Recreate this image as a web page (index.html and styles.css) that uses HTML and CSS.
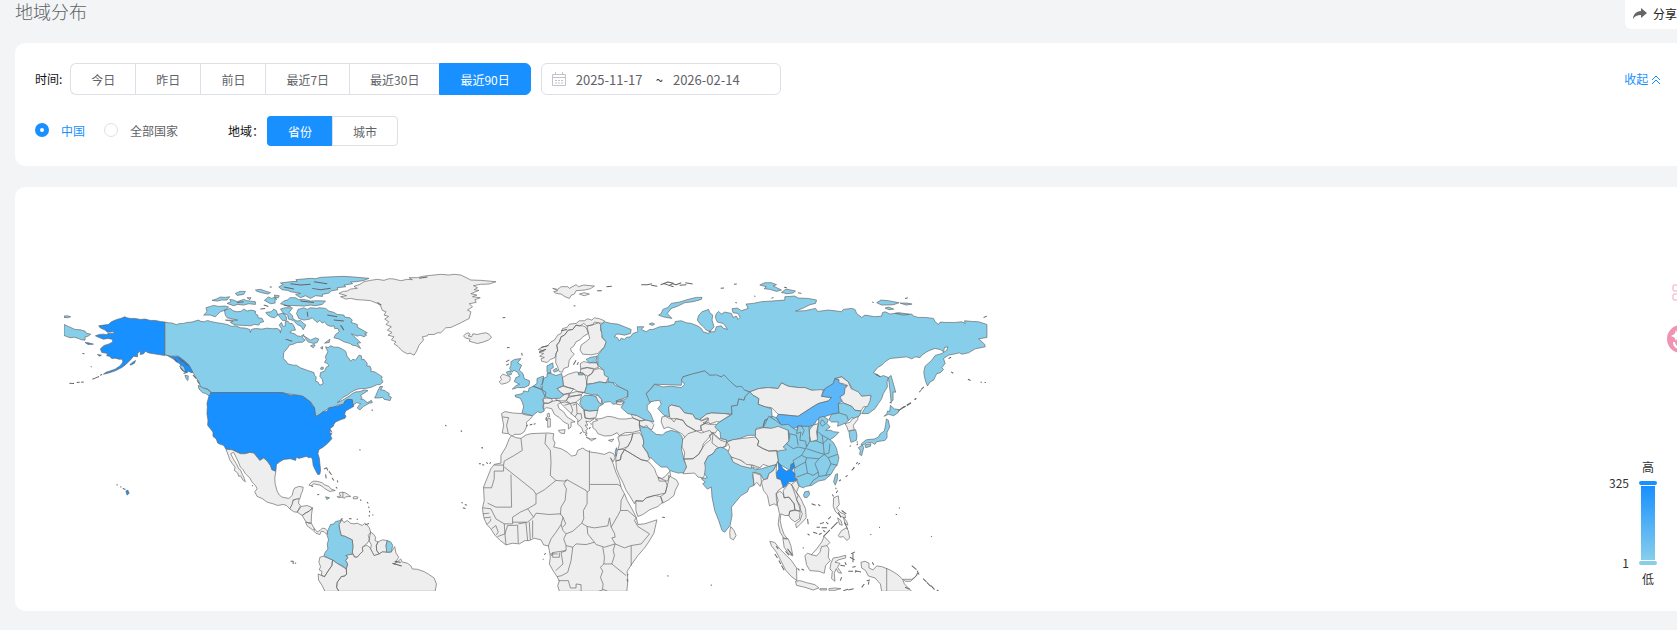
FILE: index.html
```html
<!DOCTYPE html>
<html lang="zh-CN">
<head>
    <meta charset="UTF-8">
    <meta name="viewport" content="width=device-width, initial-scale=1.0">
    <title>地域分布</title>
    <link rel="stylesheet" href="styles.css">
</head>
<body>
    <header class="page-header">
        <h1>地域分布</h1>
        <button class="share-btn" type="button">
            <svg width="16" height="14" viewBox="0 0 16 14"><path d="M9 1l6 5-6 5V8C5 8 3 9 1 12c0-4 3-8 8-8z" fill="#666"/></svg>
            分享
        </button>
    </header>

    <section class="card filters">
        <div class="filter-row">
            <span class="label">时间:</span>
            <div class="btn-group">
                <button type="button">今日</button>
                <button type="button">昨日</button>
                <button type="button">前日</button>
                <button type="button">最近7日</button>
                <button type="button">最近30日</button>
                <button type="button" class="active">最近90日</button>
            </div>
            <div class="date-range">
                <svg width="14" height="14" viewBox="0 0 14 14" fill="none" stroke="#c0c4cc"><path d="M.5 2.500h13v11H.5zM.5 5.500h13M3.500 0v3M10.500 0v3M3 8.500h2M6 8.500h2M9 8.500h2M3 11h2M6 11h2M9 11h2"/></svg>
                <input type="text" aria-label="开始日期" value="2025-11-17">
                <span>~</span>
                <input type="text" aria-label="结束日期" value="2026-02-14">
            </div>
            <a href="#" class="collapse">收起
                <svg width="10" height="10" viewBox="0 0 10 10" fill="none" stroke="#1890ff"><path d="M1 5l4-4 4 4M1 9l4-4 4 4"/></svg>
            </a>
        </div>
        <div class="filter-row">
            <label class="radio"><input type="radio" name="scope" checked><span>中国</span></label>
            <label class="radio"><input type="radio" name="scope"><span>全部国家</span></label>
            <span class="label area-label">地域：</span>
            <div class="btn-group small">
                <button type="button" class="active">省份</button>
                <button type="button">城市</button>
            </div>
        </div>
    </section>

    <section class="card chart">
        <svg class="map" viewBox="192 810 2766 962" role="img" aria-label="地域分布地图">
            <!-- Alaska, Chukotka, Hawaii -->
            <g transform="translate(150 780)">
                <path class="top" d="M344 186V286L325 283 312 281 300 279 292 277 286 273 280 281 270 283 271 272 262 280 262 290 250 288 243 297 228 312 215 322 195 332 180 337 170 340 160 342 168 336 178 333 195 327 208 318 214 312 218 306 217 297 206 297 196 294 185 295 178 288 170 287 172 280 162 278 155 277 151 266 162 256 175 252 187 246 188 238 174 235 160 237 142 230 136 227 148 223 160 222 170 224 174 219 192 219 191 214 172 216 165 210 150 203 146 197 160 195 175 193 184 185 200 178 212 175 224 170 230 173 240 175 255 175 270 178 285 177 300 181 315 181 330 184ZM344 282L362 288 375 290 384 288 395 294 404 303 416 314 428 328 426 338 414 333 410 338 400 334 400 325 392 322 390 312 384 308 376 303 372 298 358 290ZM240 312l8-6 8-5-3 8-12 6zM105 247l10 1 15 4-16 1zM142 283l12 2-5 3zM227 692l6-3 4 9-6 6z"/>
                <path class="low" d="M42 193L55 199 75 208 90 209 105 213 108 219 122 222 114 228 105 230 105 240 94 239 85 235 72 231 60 233 42 226ZM42 168l10-1 10 3-10 3-10-1z"/>
                <path class="low" d="M444 376L456 380 465 385 476 390 484 402 478 408 466 400 456 397 446 386ZM404 345l10 2-1 14-6-6zM388 318l10 14 8 2-4-14-10-6z"/>
                <path class="islets" d="M127 357l10-4 10-4M150 345l6-2M58 369l14 1M80 367l9-1M93 366l8-1M97 280l6 1M122 320l3 0M199 673l4 1M210 679l4 1M218 684l8 3M372 296l10 10M390 322l8 10M400 340l10-4M428 345l10 10M440 360l8 12M384 292l14 14M396 300l16 18"/>
            </g>
            <!-- Canada, Greenland -->
            <g transform="translate(600 795)">
                <path class="low" d="M-106 171L-95 173-85 174-70 179-66 176-50 175-40 172-25 171-16 168-5 165 2 169 12 170 22 166 30 169 50 173 65 175 80 178 95 184 105 182 120 188 135 189 148 193 150 202 153 193 165 190 185 192 200 189 215 191 230 190 238 195 240 203 243 190 236 180 243 172 248 184 255 182 254 170 262 168 268 176 275 175 280 182 285 195 275 196 268 202 282 206 290 212 300 214 310 208 306 218 314 225 306 231 290 232 276 238 266 240 262 248 250 262 248 280 255 286 262 296 278 300 288 300 300 308 322 316 340 322 342 330 347 335 345 348 352 350 358 360 368 355 365 342 358 334 360 322 372 318 377 306 385 302 380 294 372 292 377 282 374 275 382 260 375 245 383 247 390 242 400 246 412 246 422 250 435 258 440 275 444 278 450 288 457 282 465 285 475 270 482 272 484 284 490 282 500 295 498 302 508 303 512 312 510 318 522 320 530 325 545 335 542 340 547 350 538 358 530 358 512 366 495 370 482 370 470 372 460 376 450 382 440 390 430 395 420 403 410 412 425 405 445 393 455 385 465 380 478 379 490 374 502 376 490 384 480 390 484 398 480 402 488 402 500 412 508 408 512 405 515 412 505 414 495 420 488 424 478 434 470 428 474 422 480 415 468 412 457 420 455 405 445 402 435 405 430 416 418 419 410 420 398 428 385 428 368 440 360 446 345 454 342 440 342 430 335 415 322 405 310 395 295 394 280 388 262 386 245 382H35L20 370 8 368 0 363-4 350-13 337-20 325-34 299-46 288-66 273-88 273-106 269Z"/>
                <path class="low" d="M10 150L20 140 17 128 30 124 40 121 55 124 75 123 85 126 75 135 60 140 52 148 45 155 30 150ZM72 135L90 130 98 137 110 140 122 139 130 132 140 138 152 135 165 138 165 146 172 150 173 158 185 160 190 170 180 172 175 180 162 178 150 182 130 181 110 180 98 177 90 172 98 169 75 165 112 165 80 158 75 150ZM196 142L212 140 220 132 228 137 232 150 222 158 212 156 202 150ZM288 145L293 133 310 128 320 133 330 128 350 130 355 128 375 130 385 138 400 142 410 148 430 150 432 156 448 158 455 165 452 172 470 178 470 186 500 203 492 206 498 210 490 215 478 210 470 213 452 206 465 218 480 233 470 234 480 250 466 242 455 240 448 235 430 230 416 222 400 218 405 208 416 200 412 190 402 190 400 182 392 184 380 180 372 170 365 174 358 166 350 172 345 168 335 158 328 162 310 165 295 160Z"/>
                <path class="low" d="M235 66L248 58 240 54 270 50 290 49 286 44 330 40 345 41 360 37 400 35 430 34 460 36 505 40 490 46 468 50 450 51 456 56 430 60 436 65 410 68 412 74 390 78 386 84 365 88 366 94 345 92 330 100 315 92 300 98 285 88 300 85 270 80 262 76 245 74ZM240 116L250 108 262 104 268 98 285 98 295 104 310 103 330 108 350 107 375 108 365 118 345 122 330 120 310 123 290 122 275 121 262 123ZM35 106L48 102 60 96 75 97 88 95 80 105 64 105 50 108ZM105 85l14-6 16 0-5 9-20 3zM80 115L92 110 88 103 100 105 110 110 130 103 140 107 165 110 165 118 145 116 130 120 112 118 100 122ZM165 75l15-2 12 4 18 6-8 4-18-4-14-4zM192 106l12-10 10 4 10-4 0 18-14 2zM222 90l14 2-2 6-10 0zM240 132l14-4 22 0-10 14 10 10 2 10 12 6 10-2 8 8 8 6-8 14-6-10-12-6-12-12-14-4-2-12-12-4zM232 148l16-4 10 12 0 10-12 0zM140 98l12 0-4 6zM310 212L330 225 345 218 355 222 350 232 340 235 322 230ZM330 242l10-4 4 2-6 8zM360 248l6-4 0 8zM372 234l16-12-2 10zM522 398L526 390 530 380 538 364 546 364 540 374 550 375 558 380 566 385 564 392 572 396 568 406 560 404 550 402 546 396 535 398ZM362 306l6 0 0 6-8 0z"/>
                <path class="land" d="M415 85L428 79 440 78 450 72 470 70 460 64 478 58 490 50 510 46 530 43 550 46 565 41 580 42 600 47 620 43 635 44 625 38 650 38 665 34 690 31 720 28 745 30 760 28 780 30 810 45 840 46 885 50 865 57 838 58 818 62 830 68 820 74 834 76 810 86 828 90 815 95 838 98 822 104 826 112 805 116 815 125 800 135 810 140 805 160 780 173 750 187 735 188 720 203 710 203 700 208 682 208 680 212 665 215 668 225 655 240 650 252 645 262 640 270 628 264 620 266 605 258 592 244 580 236 586 230 572 224 580 215 562 210 574 202 560 195 572 185 556 178 564 170 552 162 564 154 550 150 556 140 545 136 540 122 530 115 510 107 490 105 470 104 450 100 435 102 420 95 438 92Z"/>
                <path class="islets" d="M335 70L360 74 390 70M270 56L300 60 330 58M320 140L322 155M380 150L410 155M400 165L430 168M430 195L420 180M530 112L542 120M655 40L680 36M300 108L340 112M250 66L280 72M340 50L380 56M110 112L130 110M255 222L275 228M208 66l6 0M225 100l4 4M190 120l14 4M180 132l14-2M250 120l20 4"/>
            </g>
            <!-- USA, Mexico, South America -->
            <g transform="translate(570 1110)">
                <path class="top" d="M62 67H275L300 75 318 74 335 77 348 86 360 95 365 105 372 112 374 126 375 139 385 134 398 124 408 124 415 113 428 110 440 108 452 104 460 101 462 93 472 87 485 88 486 100 490 108 478 115 465 122 462 132 466 138 463 144 450 148 435 155 430 162 428 168 418 175 424 186 420 182 415 185 424 190 420 196 424 205 410 220 398 230 385 238 382 250 386 262 388 280 390 300 388 311 382 313 375 300 368 285 366 268 362 260 355 262 348 258 340 260 325 264 318 260 315 270 300 265 280 267 268 274 258 282 256 303 244 298 240 286 230 272 220 263 215 266 208 270 200 260 190 248 178 246 165 250 150 250 125 238 107 237 100 225 90 222 82 218 78 206 68 198 68 185 60 175 52 165 53 150 50 130 51 110 50 100 55 80Z"/>
                <path class="land" d="M107 237L125 238 150 250 165 250 178 246 190 248 200 260 208 270 215 266 220 263 230 272 240 286 244 298 256 303 253 322 254 340 260 362 267 374 275 380 295 384 305 375 308 362 312 353 325 348 338 350 336 362 332 370 328 385 318 386 308 388 305 402 298 415 288 405 278 402 262 405 248 400 230 395 215 384 200 378 193 364 200 355 195 345 185 335 178 322 165 310 158 298 150 290 144 275 138 262 130 246 121 250 126 260 130 268 138 280 145 295 150 298 156 312 160 320 165 334 157 328 150 316 145 318 142 308 132 300 134 290 126 280 118 268 115 258Z"/>
                <path class="land" d="M298 415L305 402 308 390 318 386 326 385 324 398 330 406 320 425 310 424ZM320 425L332 408 350 405 366 412 356 422 346 427 335 435 328 430ZM335 435L346 427 356 422 366 412 363 432 362 458 354 458 345 452ZM345 455L362 458 372 475 366 478 350 466ZM372 475L380 484 388 480 395 473 404 474 411 482 409 492 401 484 392 482 388 492 376 488 370 482ZM355 344L362 336 370 332 382 333 395 337 402 343 415 348 422 356 434 360 418 363 412 360 402 354 398 350 388 344 370 340 362 346ZM440 378L450 377 446 367 455 365 464 367 472 372 480 378 466 379 460 384 456 380 443 382ZM488 380l6-2 8 2-2 5-12 0zM457 365V382"/>
                <path class="land" d="M452 445L460 456 470 450 480 458 490 460 500 458 515 465 522 458 530 464 536 472 540 485 533 495 537 508 528 520 515 530 517 542 508 550 500 560 492 558 485 545 487 528 485 508 475 503 462 497 452 495 448 480 445 462ZM540 485L548 490 555 500 553 510 562 514 557 525 558 540 566 550 550 555 545 545 540 535 542 522 535 510ZM562 514L575 508 590 510 586 525 590 540 588 545 575 544 566 550 558 540 557 525Z"/>
                <path class="land" d="M467 595L471 580 465 570 472 560 465 555 475 551 485 550 492 560 500 560 508 550 517 542 515 530 528 524 537 530 545 545 550 555 566 550 575 544 590 545 602 544 612 528 616 548 624 560 610 582 630 565 634 574 650 578 660 585 665 595 680 596 700 603 712 610 730 622 737 640 735 652 733 662H445L438 650 440 635 452 618 463 616 468 610ZM385 575L388 560 398 557 412 562 426 568 424 585 412 602 402 618 392 614 394 602 386 598 390 588ZM383 610L392 614 402 618 412 602 424 585 426 568 440 578 450 585 467 595 468 610 463 616 452 618 440 635 438 650 445 662H403L395 645 384 628Z"/>
                <path class="low" d="M411 482L420 462 430 460 435 453 450 450 455 443 450 455 445 462 448 480 452 495 462 497 475 503 485 508 487 528 485 550 465 555 472 560 465 570 471 580 467 595 457 586 440 578 426 568 412 562 400 555 404 545 412 535 410 520 414 508 410 495ZM590 510L600 514 606 524 602 544 588 545 586 525ZM405 379l12 3-8 5z"/>
                <path class="islets" d="M400 296l8-4 4 8M405 312l2 12M415 303l8 10M424 322l6 8M440 330l2 6M436 350l4 4M368 348l-6-2M380 373l6-1M529 395l4 4M534 408l1 5M536 421l2 5M545 433l3 1M535 433l2 5M523 463l12-4M475 445l8 0M498 446l4 0M300 572l8 0 0 8M313 577l4 1M506 238l4 1M543 118l3 3M185 345l3 2M605 578l28 8M612 572l18 4M508 388l4 2M763 165l4 2"/>
            </g>
            <!-- Europe -->
            <g transform="translate(1380 810)">
                <path class="land" d="M8 197L16 190 24 188 28 194 22 197 32 200 36 191 50 193 62 190 75 188 84 192 92 202 82 210 66 216 50 220 38 217 25 213 28 207 14 204ZM275 55L290 58 300 50 320 50 325 55 345 44 352 50 368 45 400 48 388 56 370 60 345 62 340 72 330 76 325 85 312 80 300 72 285 70 278 65 290 62ZM355 72l14-4 16 4-16 5z"/>
                <path class="land" d="M232 238L245 230 258 228 270 215 280 210 290 195 300 190 305 175 318 172 325 162 345 160 355 152 370 152 380 146 392 150 400 143 415 146 430 152 425 160 412 158 400 156 395 164 385 166 378 168 368 160 355 168 345 165 335 178 322 180 310 195 300 200 295 215 287 225 290 240 285 250 282 262 268 268 258 277 242 273 240 266 250 262 236 258 248 250 234 247 250 242ZM285 250L290 240 287 225 295 215 300 200 310 195 322 180 335 178 345 165 368 168 375 172 382 190 365 200 358 208 345 215 338 228 328 235 332 245 340 252 330 262 324 272 322 290 308 295 304 306 294 304 290 290 284 278ZM378 168L395 164 412 158 420 165 418 180 424 190 422 202 436 215 430 230 418 242 410 250 390 254 365 252 357 240 360 225 375 214 386 205 382 190ZM115 335L122 328 118 320 126 312 138 316 148 320 147 332 138 338 122 342Z"/>
                <path class="land" d="M304 322L322 312 345 305 368 310 374 320 378 345 370 368 350 364 338 356 322 352 307 346ZM288 355L305 348 322 352 338 356 328 368 308 372 298 366ZM358 280L368 274 385 278 408 278 412 292 400 295 378 292 358 295ZM358 298L378 292 398 297 392 310 380 318 368 312 358 308ZM380 318L392 310 400 298 415 295 430 300 432 312 442 322 434 338 415 335 395 340 376 342ZM325 370L345 364 368 366 362 372 345 376 325 378ZM320 382L345 376 362 374 358 385 345 396 328 400 316 392ZM284 384L300 376 322 370 322 382 314 392 300 392 285 390ZM246 386L258 383 272 385 274 393 262 399 248 397ZM248 400L262 399 274 393 290 390 300 396 290 403 294 415 308 425 318 440 342 455 330 456 330 470 322 476 322 462 308 455 295 442 280 432 272 415 256 412 248 418ZM260 445l8 0 0 24-8 2zM258 432l6-4 2 12-6 0zM292 480l20-2-2 12-12-2z"/>
                <path class="land" d="M122 430L132 424 155 428 183 430 195 434 215 436 208 446 196 456 198 466 190 484 178 492 160 492 154 498 142 490 124 488 128 465ZM125 440L143 442 137 465 142 490M368 420L385 422 410 420 407 432 404 442 385 445 372 443ZM298 398L312 395 328 400 345 396 358 408 370 420 372 443 386 446 400 445 385 455 374 452 380 465 372 464 380 476 374 480 378 490 366 485 362 472 350 462 350 448 342 440 325 425 310 410ZM310 405L328 400 335 420 330 432M335 405L346 400 348 430 342 440M348 430L360 430 362 445 350 455M375 500l14 6 16-2-14 7zM442 510l16-4-6 8z"/>
                <path class="land" d="M395 455L410 450 402 446 420 445 440 438 455 440 475 446 495 446 515 443 535 452 534 465 538 480 515 486 492 487 474 496 468 487 450 496 430 497 410 490 405 480 395 472ZM510 432L528 435 545 440 552 450 540 452 528 448 515 443ZM535 452L552 448 568 452 578 463 572 478 562 474 556 465 548 470 535 465ZM400 380L410 374 422 388 420 402 412 395Z"/>
                <path class="low" d="M378 342L395 340 415 335 434 338 450 332 462 345 480 352 500 362 500 378 488 384 465 392 470 400 455 402 448 394 430 396 424 404 422 388 410 374 395 374 370 368ZM360 385L370 375 395 376 405 380 412 395 422 404 412 410 410 420 385 422 368 418 356 400Z"/>
                <path class="land" d="M465 392l14-4 12 4-10 12-14-2z"/>
                <path class="low" d="M150 285L150 275 160 268 180 265 170 278 182 285 175 300 186 310 190 325 206 332 204 345 190 352 170 352 154 357 165 346 176 342 160 334 165 322 176 318 170 306 158 300 154 306 146 295ZM136 306l12-4 4 10-10 4zM258 287L264 284 275 278 277 292 268 298 270 308 258 306ZM276 300l10-6 4 8-10 4zM228 325L240 320 248 318 246 335 240 345 242 358 228 352 216 348 228 340ZM246 325L258 320 258 310 270 310 285 316 302 310 304 322 307 346 288 355 298 366 308 374 296 384 272 385 252 380 248 370 244 360 244 345ZM162 375L185 370 188 362 202 365 204 354 216 348 228 352 242 358 255 366 252 380 244 388 248 397 246 412 250 422 238 428 230 424 215 436 198 432 183 428 188 410 185 398 178 384 164 380ZM256 440l2 12-4-4zM375 268L386 262 408 258 405 270 408 278 396 276 385 278ZM352 308l14 0 0 6-14 0z"/>
                <path class="islets" d="M125 143l8-1M338 107l5 1M138 233l8-1M182 248l2 8M408 62l14 0M436 50l16-1M540 44l18 0 14-3M570 46l18 3M598 44l22-8 16 4-12 6M630 40l14 4 16-6M655 46l20-2M672 38l22 4M605 40l32 10M196 467l4-2M206 464l8-2M218 462l6-2M0 482l4 1M62 532l4 0M345 270l-8 14M352 276l-4 8M135 275l10-6M136 285l8-4M356 490l6-4M372 492l6 4M388 470l-4 6M388 460l4 2M235 245l20-8M240 232l22-6M300 182l18-4"/>
            </g>
            <!-- Africa and the Middle East -->
            <g transform="translate(1380 1200)">
                <path class="land" d="M145 115L152 106 165 112 180 114 195 104 210 100 230 99 262 98 278 100 276 116 282 128 278 140 300 145 318 155 332 167 345 164 350 150 365 143 375 150 388 155 410 158 430 162 445 155 458 160 462 172 456 184 448 172 456 190 464 215 475 240 480 262 490 280 498 300 512 325 525 350 530 372 550 370 587 358 582 380 578 398 562 425 550 442 530 465 512 490 498 512 500 540 497 572H295L290 555 295 540 288 528 276 510 265 490 268 470 265 450 262 436 248 433 240 418 220 413 205 420 192 420 175 430 155 428 135 433 118 420 102 404 90 385 78 372 70 355 66 335 65 322 70 300 68 260 78 235 90 205 100 192 120 188 120 165 135 140Z"/>
                <path class="border" d="M180 114L184 150 160 165 130 182 128 194H100M128 194V212H100V235L92 262H68M130 200L218 270 225 282 250 268 285 240M150 222L152 320H105L80 308M225 282V310L200 325 178 335 155 350 155 370 130 370 105 355 90 325 66 322M66 340L85 338M70 352L90 350M90 355L88 362 78 372M130 370L132 400 110 408M92 385L105 375 112 395 105 404M132 400L135 432M132 400L140 375 170 374 172 428M155 365L200 365 218 350 200 325M172 370L195 366 200 420M205 365L208 418M215 360L215 412M255 100L252 130 268 150 270 185 268 225 285 240 310 242 318 238 375 270 378 275 385 270 385 150M387 252L470 252 480 258M318 238L308 250 316 265 312 300 300 320 298 342M218 350L225 338 265 342 298 340 306 350 300 372 285 395 270 415 262 436M378 275L378 310 367 330 368 355 362 368 335 392 315 400 306 390 300 372M306 350L314 370 305 380M315 400L308 415 315 435 335 440 345 430 375 432 400 425 380 400 378 378 362 368M378 378L400 382 440 376 445 352 450 380 460 398 462 410 452 412 462 430 430 440 405 432 400 425M450 380L470 345 478 330 480 300 490 280M478 330L500 330 525 352M525 352L520 360 530 378 565 400 540 430 510 435 490 442 462 430M510 435V495M462 430L456 450 460 465 452 490 428 490 430 470 425 440M452 490L495 525M428 490L418 500 425 512 418 530 426 550 424 568 412 572M315 435L315 450 275 456 270 466M335 440L330 480 320 515 302 525 288 528M315 450L300 456 306 490 284 510M275 456V470H295V456M268 460L290 460M292 540H322L328 562H345V550L360 552V572M426 566L440 572"/>
                <path class="land" d="M470 110L482 105 500 104 515 100 510 120 500 138 482 146 470 148 475 130ZM515 100L535 97 545 112 548 125 545 138 560 160 566 175 558 182 540 178 510 160 490 148 500 138 510 120ZM464 155L470 148 482 146 490 148 480 165 478 178 464 182ZM464 182L478 178 480 165 490 148 510 160 540 178 558 182 566 188 580 205 585 220 592 232 612 240 618 255 612 278 580 285 555 292 545 302 524 300 520 310 505 285 495 270 486 248 474 225 466 205ZM524 302L545 302 555 292 580 285 598 288 605 305 590 318 565 328 545 342 530 348 524 330ZM598 288L612 278 618 255 622 240 622 225 634 232 645 238 652 250 642 270 638 285 622 298 604 308ZM590 230L602 234 612 228 626 212 628 226 618 242 594 242Z"/>
                <path class="low" d="M535 75L545 82 558 80 572 92 585 102 604 104 612 96 630 90 650 96 662 108 665 125 660 145 665 165 668 180 676 195 672 216 650 218 625 210 618 200 600 200 585 188 572 174 562 170 560 158 545 138 548 125 545 112 538 92ZM462 154l4-12 2 12-3 14z"/>
                <path class="islets" d="M54 190l6 0M64 193l6 1M76 186l5 4M86 190l4-4M2 306l4 2M12 312l6 2M6 322l8 2M62 142l4 1M603 350l8 1M618 525l4 2M250 462l4-4M245 476l3 0M500 520l0 4M498 535l1 8M0 92l2 0"/>
            </g>
            <!-- Russia, Central Asia, Mongolia -->
            <g transform="translate(1860 840)">
                <path class="low" d="M-62 135L-50 125-30 130-10 132 10 140 30 148 28 160 10 165-5 162-15 162-20 170-12 172-5 183 0 174 10 178 15 172 28 170 35 160 50 155 48 140 68 140 60 148 75 155 85 148 95 148 115 140 140 138 160 132 162 124 180 122 195 128 210 130 228 137 240 145 245 155 262 160 268 155 255 150 246 140 235 130 228 120 232 106 242 95 262 88 265 98 274 105 272 120 278 140 272 148 262 155 280 155 285 140 300 137 305 144 318 148 312 138 305 130 288 126 282 112 285 100 292 94 300 102 310 96 330 100 335 112 345 108 350 118 356 112 350 100 335 98 332 86 348 84 360 92 380 85 374 72 395 70 420 65 450 63 490 60 490 50 520 48 530 54 560 55 585 60 582 70 565 74 545 84 522 93 550 92 582 85 588 94 620 90 640 92 660 95 665 88 690 85 700 88 705 100 720 112 730 105 760 110 780 108 782 98 790 95 805 102 830 98 850 102 870 102 875 108 890 112 912 112 935 115 940 125 950 133 955 126 970 127 1000 127 1020 125 1030 130 1028 122 1050 124 1070 125 1095 133V172L1070 176 1088 192 1090 200 1060 206 1040 218 1020 222 1012 218 995 222 980 225 965 235 970 250 960 262 965 268 955 278 945 280 935 300 925 305 917 317 912 305 908 290 906 275 910 258 930 240 940 226 960 220 975 210 978 200 968 202 965 215 955 208 940 205 925 210 915 215 900 225 895 232 880 230 870 236 855 230 835 232 805 235 790 245 780 255 768 262 755 278 770 284 775 290 785 286 800 292 796 305 797 320 785 340 780 355 770 370 760 385 740 400 720 400 735 375 748 348 720 348 695 330 680 305 660 290 640 295 635 310 610 330 590 332 570 330 550 322 530 322 500 318 480 308 470 325 440 322 412 325 385 335 370 330 345 320 320 300 300 290 265 285 250 272 185 290 180 315 100 312 75 340 90 365 78 375 78 388 88 400 98 425 70 418 45 405 20 400 0 382 10 365-15 365 10 358 20 350 20 332-5 320-20 308-40 305-38 292-50 285-52 270-70 255-70 225-50 200-45 185-56 172-60 150Z"/>
                <path class="low" d="M112 105L120 100 125 88 140 82 150 70 175 66 200 58 225 52 242 52 240 58 215 65 190 68 170 78 150 85 138 100 152 115 135 112 125 110ZM415 15L430 8 450 8 465 14 455 18 480 30 465 34 445 28 428 26 435 20ZM480 37l14-10 28 6-8 6-18 2zM84 132l8-4 8 4-6 4zM765 68L778 60 800 62 832 68 815 74 780 75ZM835 69l20 0 16 3-18 3zM790 84l10-3 16 6-14 2zM820 100l20-1 22 4-18 2zM800 292L808 286 812 300 822 336 814 335 814 360 808 365 806 340Z"/>
                <path class="low" d="M75 340L88 328 100 312 125 320 150 318 180 322 190 312 180 300 185 290 210 282 250 272 265 285 285 284 300 290 308 284 325 302 345 320 360 318 370 330 385 335 372 348 368 360 352 356 348 375 330 378 332 402 312 400 270 398 255 402 235 418 222 415 214 402 190 398 175 380 150 374 142 380 145 410 128 405 110 385 120 372 115 360 100 362 85 365Z"/>
                <path class="land" d="M145 410L142 380 150 374 175 380 190 398 214 402 222 415 235 418 240 422 262 414 250 430 238 436 240 450 225 452 195 435 185 420 165 415 158 425ZM128 445L120 425 122 410 132 408 145 415 165 415 185 420 195 435 225 452 215 460 198 480 184 462 160 448 140 440ZM235 418L255 402 270 398 312 400 328 404 310 415 295 425 285 424 262 432 245 428 262 420 258 412 242 420ZM238 436L262 425 266 432 285 432 290 445 282 458 265 455 250 458 240 450ZM385 335L412 325 440 322 470 325 480 308 500 318 530 322 550 322 570 330 605 328 600 348 630 352 620 362 590 370 570 382 550 395 530 408 490 404 470 402 450 382 432 380 410 372 412 355 395 345Z"/>
                <path class="low" d="M385 335L395 345 412 355 410 372 432 380 450 385 452 410 430 420 425 440 405 444 402 465 380 465 350 476 320 482 298 474 296 455 280 440 290 428 332 402 330 378 348 375 352 356 368 360 372 348ZM430 420L452 408 465 412 482 438 500 440 510 445 545 480 535 505 500 490 478 460 455 440 425 440Z"/>
                <path class="mid" d="M640 295L652 298 655 308 668 315 678 316 670 325 668 342 655 350 668 358 650 370 652 398 630 402 600 412 585 420 580 430 552 452 540 450 540 435 515 445 500 440 482 438 465 412 470 402 490 404 530 408 550 395 570 382 590 370 620 362 630 352 600 348 610 325 635 310Z"/>
                <path class="land" d="M640 295L660 290 680 305 688 325 710 335 720 348 748 345 745 362 738 378 725 380 718 392 700 390 690 378 665 368 655 350 668 342 670 325 678 316 664 310 652 308 652 298Z"/>
                <path class="low" d="M650 370L665 368 690 378 700 390 718 392 715 405 700 415 690 412 672 428 648 438 650 425 630 425 622 418 630 402 652 398ZM652 398L675 405 680 420"/>
                <path class="islets" d="M298 25l10-1M338 13l8-1M398 48l4 1M342 67l4 2M450 55l6-3M530 38l10 2M488 22l8 1M752 66l4 1M850 55l8-2M1085 112l10-4M980 235l8-4M988 275l6 4M1038 297l8 4M1076 306l4 0M1088 307l4 0M906 320l-8 8M898 330l-6 6M880 358l4-4M855 375l12-8M835 388l14-10"/>
            </g>
            <!-- China, South and Southeast Asia -->
            <g transform="translate(2040 1140)">
                <path class="land" d="M4 178L20 160 45 152 60 158 85 150 92 160 80 175 66 190 62 205 52 222 35 235 8 236 10 215 2 200ZM8 236L35 235 52 222 62 205 72 190 88 178 84 164 95 158 105 170 118 180 136 185 130 200 105 205 95 220 80 228 70 248 78 262 66 292 50 290 40 278 5 280 16 260ZM95 158L115 175 135 178 137 196 115 205 92 188Z"/>
                <path class="low" d="M60 295L78 292 70 280 72 262 70 248 80 228 95 220 105 205 118 200 130 205 148 215 150 235 180 250 210 260 222 268 240 265 262 258 285 252 276 270 262 280 258 295 246 298 238 282 220 275 214 285 218 315 204 320 198 334 178 346 165 362 150 380 152 405 146 435 130 455 122 450 112 420 100 390 92 350 90 320 78 326 64 310 72 305Z"/>
                <path class="land" d="M150 232L165 230 185 245 210 253 210 264 180 257 155 245ZM214 254l20-4 6 8-10 6-14-2zM214 276L226 280 238 284 240 306 236 318 226 306 218 314ZM148 438L158 450 164 465 156 478 146 472 145 455Z"/>
                <path class="low" d="M245 142L262 108 282 120 300 134 320 132 330 140 345 150 350 136 360 138 382 138 410 132 412 112 425 108 440 118 436 130 446 140 432 150 448 150 455 154 472 156 458 170 445 178 455 186 465 205 468 220 472 232 468 250 458 265 448 282 430 298 410 302 390 315 372 318 366 322 354 318 345 298 336 280 340 262 330 262 322 268 305 258 290 250 288 210 305 200 322 182 320 150Z"/>
                <path class="border" d="M320 150L325 170 315 190 335 205 350 200 372 205 360 225 335 240 340 262M322 160L345 165 350 195M350 136L345 160 358 155 355 180 372 182 375 200M360 138L368 150 362 165M382 138L385 182 372 205M410 132L405 182 385 182M405 182L425 190 428 222 405 215 375 205M425 190L422 165 410 155M422 165L445 178M440 175L425 188M445 190L442 218 428 222 412 235 375 232 360 225M375 232L372 245 340 262M372 245L378 278 345 290M378 278L395 285 410 275 400 250 412 235M410 275L412 288 395 300 385 315M412 288L432 285 448 250 440 232 428 222M440 232L468 222M448 250L468 255M432 285L445 282M432 130L422 118 415 128 422 138 432 130"/>
                <path class="land" d="M384 148L395 134 410 130 405 155 408 178 388 184 384 165ZM137 185L155 178 185 174 222 170 232 182 228 195 245 205 262 212 285 210 290 240 284 252 262 258 245 252 235 262 214 254 195 252 180 240 150 230 140 215 145 200ZM222 148L245 142 270 144 290 138 305 144 320 150 322 182 305 200 315 208 288 212 262 212 245 205 228 195 232 182 222 170Z"/>
                <path class="top" d="M289 244L298 254 304 264 314 272 326 268 328 252 336 248 338 260 331 272 341 280 339 292 348 298 334 304 322 304 314 316 306 322 298 314 298 298 286 294 284 278 292 266Z"/>
                <path class="low" d="M366 344L370 334 382 332 384 342 376 352 368 350ZM456 304L462 282 468 280 467 298 461 314ZM502 152L522 148 526 165 524 180 508 186 504 170Z"/>
                <path class="land" d="M490 130L505 126 512 116 530 108 528 118 515 135 518 148 500 152 496 140ZM285 252L284 278 286 294 298 298 305 320 290 330 284 340 290 360 285 375 278 370 264 376 258 345 246 330 240 306 246 298 258 295 262 280 276 270ZM284 340L295 332 305 340 308 352 322 350 338 370 340 388 325 392 322 405 310 405 298 400 296 420 300 440 308 462 318 475 308 475 296 455 290 430 294 400 285 360ZM312 322L322 308 330 312 350 345 345 358 356 375 355 392 340 388 338 370 322 350 308 352 305 330ZM330 312L345 300 352 318 345 335 358 355 372 385 374 412 362 425 345 442 342 430 356 420 362 400 348 365 340 340ZM325 392L340 390 356 392 354 415 340 424 328 415 322 405ZM304 472L320 475 328 495 334 526 322 520 308 500Z"/>
                <path class="land" d="M265 482L280 486 295 505 315 525 330 540 345 562 346 600 330 588 312 568 298 540 285 515 270 496ZM342 602L355 600 375 606 400 612 412 622 395 628 370 620 345 614ZM415 624l20 0 0 4-20 0zM442 624l18-2 18 2-18 5-18 0zM370 525L378 518 390 522 405 505 420 485 428 468 445 486 436 495 442 505 440 530 446 540 432 555 428 578 412 572 385 570 375 552ZM388 522L405 526 415 515 420 498 436 495M448 548L455 532 470 530 492 524 492 532 470 538 460 545 475 548 468 560 480 578 470 576 464 564 458 578 460 602 450 594 452 572 445 565ZM456 352L470 346 473 372 465 382 475 395 490 402 492 412 478 408 462 394 455 378ZM470 465L480 450 494 442 500 450 504 472 496 480 485 468 474 470ZM468 412l10 8 4 14-8-2zM485 410l10 12 4 12-8-4zM538 545L550 542 562 548 562 562 574 568 585 556 600 558 625 568 645 580 662 595 668 610 690 632H600L596 610 580 592 560 586 552 570 540 562ZM664 596L690 596 704 586 708 576 700 590 686 602 670 602Z"/>
                <path class="border" d="M615 562V632"/>
                <path class="islets" d="M508 520l12-6M514 515v30M505 530l14 8M490 545l4 8M476 554l14 2M500 572l14 0M520 570l18 4M512 560l10-2M480 590l-4 10M555 600l10-2M560 612l2-10M540 620l8-10M485 630l14-4M500 628l16-4M520 575l6-4M468 425l-20 20M445 448l-20 20M390 370l12 4M410 372l6 4M405 440l10 0M415 430l12-4M420 442l16 0M395 455l12 4M412 462l8-4M378 460l6 4M365 500v4M434 425l6 6M425 450l6 4M448 408l-8 8M348 563l6 6M360 565l8 4M280 520l8 12M292 540l6 10M300 555l8 14M690 555l14 12M706 570l6 12M724 594l10 10M735 605l12 12M748 615l10 12M765 628l6 4M670 620l14 6M572 545l4 8M452 342l4 6M378 415l2 16M88 613l4 1M642 402l4 0M652 381l2 3M566 461l3 2M592 440l3 1M748 467l2 2M535 248l-6 4M518 262l-8 8M498 285l-6 4M478 298l-6 4M462 322l2 4M468 330l-4 8M480 390l14 10M488 425l10 20M470 395l8 16M312 512l10 12M318 505l14 18M290 505l-6-8"/>
            </g>
            <!-- Japan -->
            <g transform="translate(2490 810)">
                <path class="low" d="M157 438L165 430 168 422 174 424 176 405 188 416 204 418 198 428 186 436 170 432ZM88 522L96 514 105 508 128 506 140 500 146 490 158 482 162 462 164 446 170 450 174 470 166 486 166 502 160 510 148 512 135 514 130 522 120 516 105 518 94 524ZM100 524l18-4-2 8-14 4zM80 532L92 524 96 532 90 556 84 552 86 540Z"/>
                <path class="islets" d="M200 422l8-6M210 414l12-6M226 406l12-8M248 388l4-4M75 524l4-4M54 528l4-2M78 575l-4 6M68 590l-4 6M174 396l6 2M132 312l14 8M75 515l4 0"/>
            </g>
        </svg>

        <div class="legend">
            <span class="legend-text">高</span>
            <div class="legend-scale">
                <div class="legend-values"><span>325</span><span>1</span></div>
                <div class="legend-track"><i class="handle max"></i><i class="bar"></i><i class="handle min"></i></div>
            </div>
            <span class="legend-text">低</span>
        </div>
    </section>

    <div class="float-tools">
        <button type="button" aria-label="应用">
            <svg width="18" height="18" viewBox="0 0 18 18" fill="none" stroke="#f5a3bd"><rect x="1" y="1" width="6" height="6" rx="1"/><rect x="1" y="10" width="6" height="6" rx="1"/><rect x="10" y="1" width="6" height="6" rx="1"/><rect x="10" y="10" width="6" height="6" rx="1"/></svg>
        </button>
        <button type="button" aria-label="助手">
            <svg width="28" height="28" viewBox="0 0 28 28"><circle cx="14" cy="14" r="14" fill="#ef94b2"/><path d="M9 5l1.500 4L15 11l-4.500 1.500L9 16l-1.500-3.500L4 11l3.500-2z" fill="#fff"/><path d="M7 17c0 4 3 6 7 6s7-2 7-6" fill="none" stroke="#fff" stroke-width="2"/></svg>
        </button>
    </div>
</body>
</html>
```
FILE: styles.css
```css
* {
    margin: 0;
    padding: 0;
    box-sizing: border-box;
}

body {
    position: relative;
    min-height: 100vh;
    padding-left: 15px;
    background: #f2f4f6;
    font-family: "Noto Sans CJK SC", "Noto Sans", sans-serif;
    font-size: 12px;
    color: #303133;
    overflow: hidden;
}

button,
input {
    font-family: inherit;
    font-size: inherit;
}

button {
    cursor: pointer;
}

.page-header {
    display: flex;
    justify-content: space-between;
    align-items: flex-start;
    height: 43px;
}

.page-header h1 {
    font-size: 18px;
    font-weight: 300;
    line-height: 23px;
    color: #606266;
}

.share-btn {
    display: flex;
    align-items: center;
    gap: 5px;
    height: 29px;
    padding-left: 7px;
    padding-bottom: 2px;
    border: none;
    border-radius: 0 0 0 6px;
    background: #fff;
    color: #222;
    white-space: nowrap;
}

.card {
    background: #fff;
    border-radius: 10px 0 0 10px;
}

.filters {
    display: flex;
    flex-direction: column;
    gap: 21px;
    padding: 20px 16px 20px 20px;
    margin-bottom: 21px;
}

.filter-row {
    display: flex;
    align-items: center;
}

.label,
.radio,
.collapse {
    padding-bottom: 2px;
}

.label {
    margin-right: 8px;
    color: #111;
}

.btn-group {
    display: flex;
}

.btn-group button {
    height: 32px;
    padding: 0 20px;
    border: 1px solid #dcdfe6;
    border-right: none;
    background: #fff;
    color: #606266;
}

.btn-group button:first-child {
    border-radius: 6px 0 0 6px;
}

.btn-group button:last-child {
    border-right: 1px solid #dcdfe6;
    border-radius: 0 6px 6px 0;
}

.btn-group button.active {
    background: #1890ff;
    border-color: #1890ff;
    color: #fff;
}

.btn-group.small button {
    height: 30px;
}

.btn-group.small button:first-child {
    border-radius: 4px 0 0 4px;
}

.btn-group.small button:last-child {
    border-radius: 0 4px 4px 0;
}

.date-range {
    display: flex;
    align-items: center;
    width: 240px;
    height: 32px;
    margin-left: 10px;
    padding: 0 10px;
    border: 1px solid #dcdfe6;
    border-radius: 6px;
}

.date-range input {
    width: 70px;
    margin-left: 10px;
    border: none;
    outline: none;
    font-size: 13px;
    color: #606266;
}

.date-range span {
    margin-left: 10px;
    font-size: 13px;
}

.collapse {
    margin-left: auto;
    color: #1890ff;
    text-decoration: none;
}

.collapse svg {
    vertical-align: -1px;
}

.radio {
    display: flex;
    align-items: center;
    margin-right: 19px;
    color: #606266;
}

.radio input {
    appearance: none;
    width: 14px;
    height: 14px;
    margin-right: 12px;
    border: 1px solid #dcdfe6;
    border-radius: 50%;
    background: #fff;
}

.radio input:checked {
    border: 5px solid #1890ff;
}

.radio input:checked + span {
    color: #1890ff;
}

.area-label {
    margin-left: 31px;
    margin-right: 3px;
}

.chart {
    display: flex;
    justify-content: space-between;
    align-items: flex-end;
    padding: 83px 20px 20px 49px;
}

/* map */
.map {
    width: 58%;
    height: auto;
}

.map path {
    stroke: #666;
    stroke-width: 2;
    stroke-linejoin: round;
}

.map .land {
    fill: #eee;
}

.map .low {
    fill: #87ceeb;
}

.map .mid {
    fill: #5bb6fa;
}

.map .top {
    fill: #1890ff;
}

.map .border,
.map .islets {
    fill: none;
}

.map .islets {
    stroke-width: 3;
}

/* legend */
.legend {
    display: flex;
    flex-direction: column;
    align-items: flex-end;
    gap: 6px;
    padding-bottom: 4px;
}

.legend-text {
    width: 18px;
    line-height: 16px;
    text-align: center;
}

.legend-scale {
    display: flex;
    gap: 10px;
}

.legend-values {
    display: flex;
    flex-direction: column;
    justify-content: space-between;
    line-height: 4px;
    text-align: right;
}

.legend-track {
    display: flex;
    flex-direction: column;
    align-items: center;
    gap: 1px;
    width: 18px;
}

.handle {
    width: 18px;
    height: 4px;
    border-radius: 2px;
}

.handle.max {
    background: #1890ff;
}

.handle.min {
    background: #87ceeb;
}

.bar {
    width: 14px;
    height: 74px;
    background: linear-gradient(#1890ff, #87ceeb);
}

.float-tools {
    position: absolute;
    top: 284px;
    right: -18px;
    display: flex;
    flex-direction: column;
    align-items: center;
    gap: 23px;
}

.float-tools button {
    display: flex;
    border: none;
    background: none;
}
```
